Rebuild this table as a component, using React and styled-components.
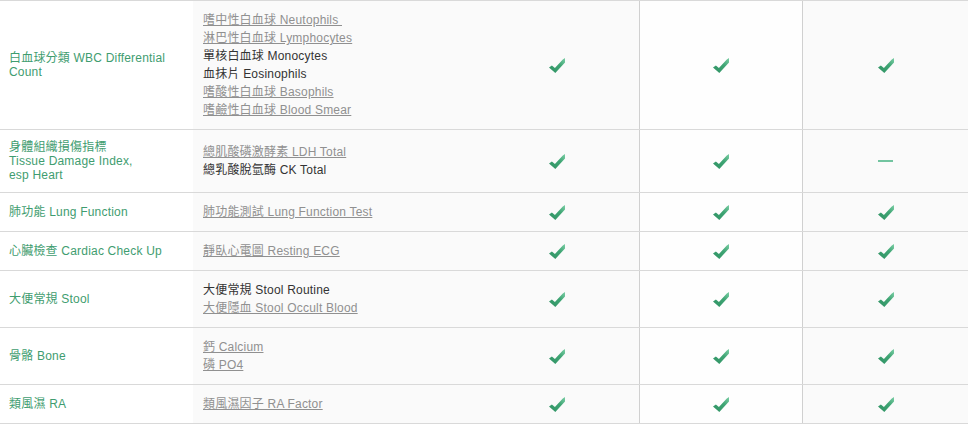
import React from "react";
import styled, { createGlobalStyle } from "styled-components";

const Global = createGlobalStyle`
  html, body { margin: 0; padding: 0; background: #fff; }
  body { font-family: "Liberation Sans", Arial, "Noto Sans CJK TC", sans-serif; font-size: 12px; letter-spacing: 0.2px; }
`;

const Table = styled.div`
  width: 968px;
  border-top: 1px solid #d9d9d9;
`;

const Row = styled.div`
  display: grid;
  grid-template-columns: 193px 282px 164px 163px 166px;
  border-bottom: 1px solid #d9d9d9;
`;

const Label = styled.div`
  display: flex;
  align-items: center;
  padding: 10px 10px 10px 9px;
  background: #fff;
  color: #3f9d70;
  line-height: 14px;
`;

const Tests = styled.div`
  display: flex;
  flex-direction: column;
  justify-content: center;
  padding: 10px 10px;
  background: #fafafa;
  line-height: 18px;
`;

const Test = styled.span`
  color: ${(p) => (p.$link ? "#909090" : "#333")};
  text-decoration: ${(p) => (p.$link ? "underline" : "none")};
  white-space: pre;
  align-self: flex-start;
`;

const Cell = styled.div`
  display: flex;
  align-items: center;
  justify-content: center;
  background: ${(p) => (p.$white ? "#fefefe" : "#fafafa")};
  border-left: ${(p) => (p.$divider ? "1px solid #d0d0d0" : "none")};
`;

const Dash = styled.span`
  display: block;
  width: 15px;
  height: 2px;
  background: #72c4a0;
`;

let gid = 0;
const Check = () => {
  const id = `chk${gid++}`;
  return (
    <svg width="16" height="15" viewBox="0 0 16 15">
      <defs>
        <linearGradient id={id} x1="0" y1="1" x2="1" y2="0">
          <stop offset="0" stopColor="#2f9163" />
          <stop offset="0.6" stopColor="#3fa574" />
          <stop offset="1" stopColor="#7ccfa6" />
        </linearGradient>
      </defs>
      <path d="M0 9.6 L2.9 7.4 L5.9 10.1 L13.8 1.4 L16 0 L16 4.4 L6.3 15 Z" fill={`url(#${id})`} />
    </svg>
  );
};

const rows = [
  {
    label: "白血球分類 WBC Differential Count",
    tests: [
      ["嗜中性白血球 Neutophils ", true],
      ["淋巴性白血球 Lymphocytes", true],
      ["單核白血球 Monocytes", false],
      ["血抹片 Eosinophils", false],
      ["嗜酸性白血球 Basophils", true],
      ["嗜鹼性白血球 Blood Smear", true],
    ],
    marks: [1, 1, 1],
  },
  {
    label: (
      <>
        身體組織損傷指標
        <br />
        Tissue Damage Index,
        <br />
        esp Heart
      </>
    ),
    tests: [
      ["總肌酸磷激酵素 LDH Total", true],
      ["總乳酸脫氫酶 CK Total", false],
    ],
    marks: [1, 1, 0],
  },
  { label: "肺功能 Lung Function", tests: [["肺功能測試 Lung Function Test", true]], marks: [1, 1, 1] },
  { label: "心臟檢查 Cardiac Check Up", tests: [["靜臥心電圖 Resting ECG", true]], marks: [1, 1, 1] },
  {
    label: "大便常規 Stool",
    tests: [
      ["大便常規 Stool Routine", false],
      ["大便隱血 Stool Occult Blood", true],
    ],
    marks: [1, 1, 1],
  },
  {
    label: "骨骼 Bone",
    tests: [
      ["鈣 Calcium", true],
      ["磷 PO4", true],
    ],
    marks: [1, 1, 1],
  },
  { label: "類風濕 RA", tests: [["類風濕因子 RA Factor", true]], marks: [1, 1, 1] },
];

export default function App() {
  return (
    <>
      <Global />
      <Table>
        {rows.map((r, i) => (
          <Row key={i}>
            <Label>
              <div>{r.label}</div>
            </Label>
            <Tests>
              {r.tests.map(([t, link], j) => (
                <Test key={j} $link={link}>
                  {t}
                </Test>
              ))}
            </Tests>
            <Cell>{r.marks[0] ? <Check /> : <Dash />}</Cell>
            <Cell $white $divider>
              {r.marks[1] ? <Check /> : <Dash />}
            </Cell>
            <Cell $divider>{r.marks[2] ? <Check /> : <Dash />}</Cell>
          </Row>
        ))}
      </Table>
    </>
  );
}
